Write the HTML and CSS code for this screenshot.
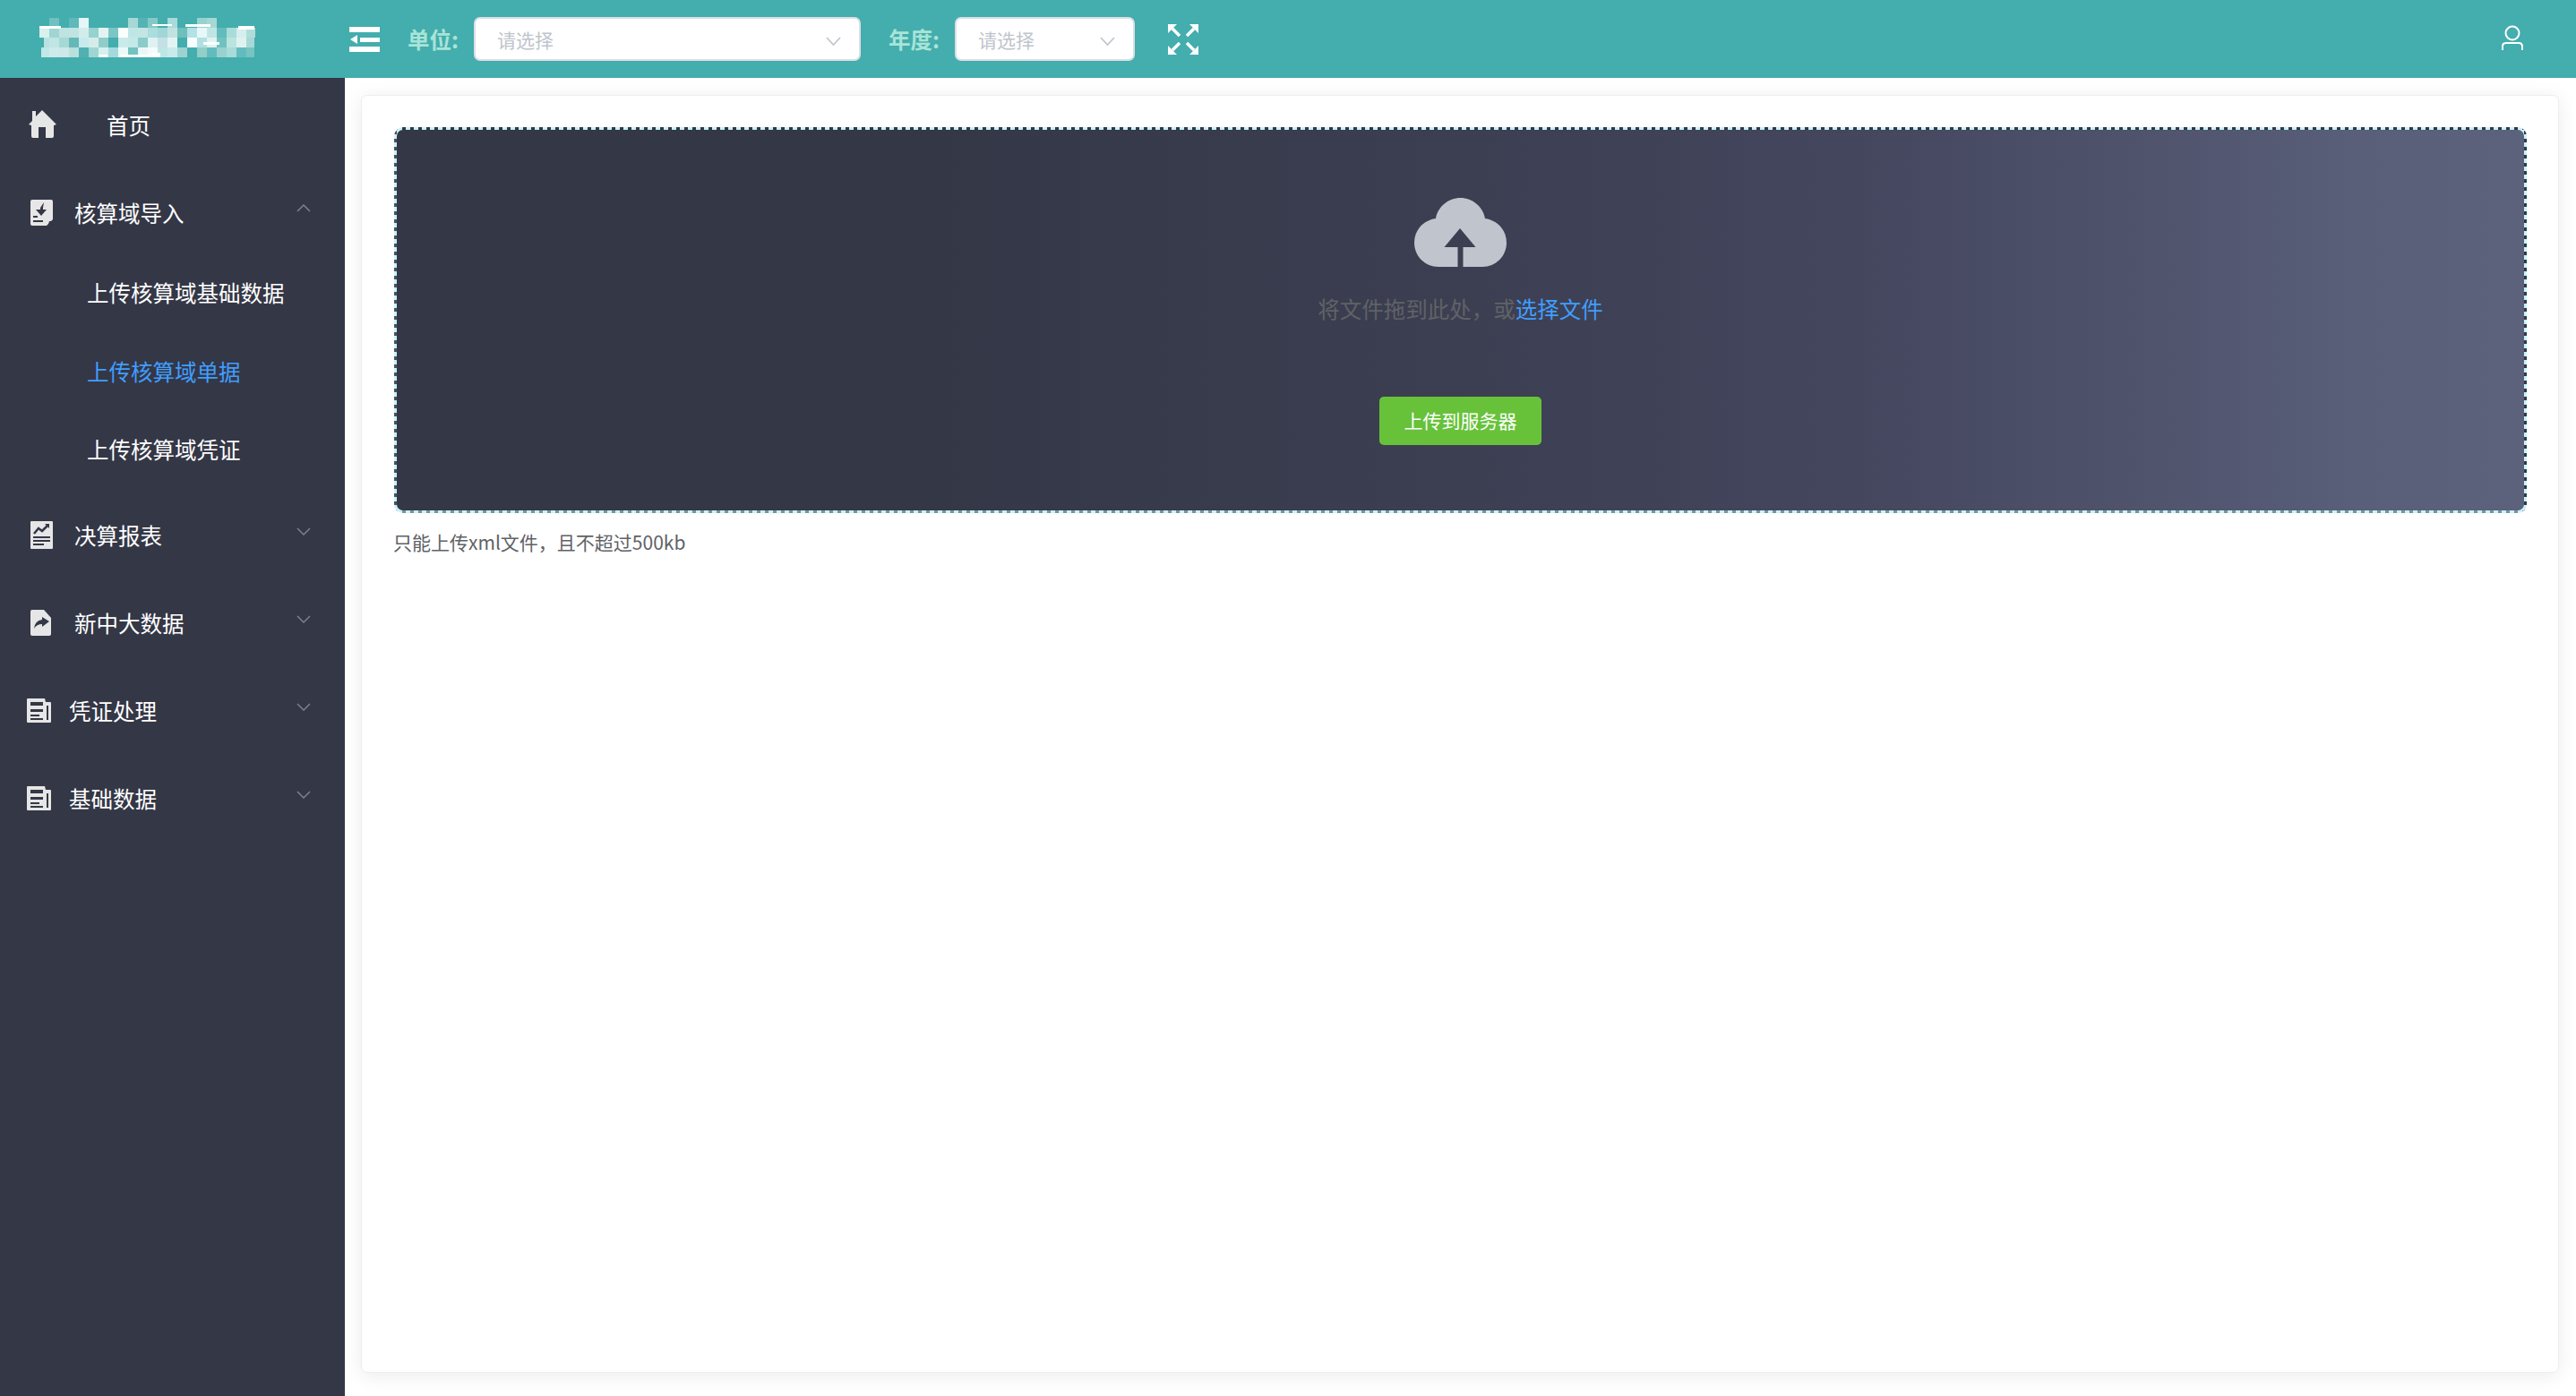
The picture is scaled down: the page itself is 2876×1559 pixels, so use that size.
FILE: index.html
```html
<!DOCTYPE html>
<html lang="en">
<head>
    <meta charset="UTF-8">
    <meta name="viewport" content="width=device-width, initial-scale=1.0">
    <title>核算域导入</title>
    <link rel="stylesheet" href="styles.css">
</head>
<body>
    <header class="topbar">
        <div class="logo">
            <!-- the product name is blurred to a mosaic in the original -->
            <svg width="242" height="44" viewBox="0 0 242 44" shape-rendering="crispEdges">
                <g>
                    <rect x="11" y="0" width="11" height="11" fill="#6fc0c2"/><rect x="33" y="0" width="11" height="11" fill="#5fb8ba"/><rect x="44" y="0" width="11" height="11" fill="#e6f6f6"/><rect x="99" y="0" width="11" height="11" fill="#a5d8d6"/><rect x="110" y="0" width="11" height="11" fill="#55b3b5"/><rect x="121" y="0" width="11" height="11" fill="#85c9c6"/><rect x="143" y="0" width="11" height="11" fill="#a8dada"/><rect x="176" y="0" width="11" height="11" fill="#96d2cf"/><rect x="187" y="0" width="11" height="11" fill="#a5d8d4"/>
                    <rect x="0" y="11" width="11" height="11" fill="#d8f0ee"/><rect x="11" y="11" width="11" height="11" fill="#a0d5d3"/><rect x="22" y="11" width="11" height="11" fill="#bfe3e1"/><rect x="33" y="11" width="11" height="11" fill="#c0e4e2"/><rect x="44" y="11" width="11" height="11" fill="#d2ecec"/><rect x="55" y="11" width="11" height="11" fill="#95d2d0"/><rect x="66" y="11" width="11" height="11" fill="#e3f3f1"/><rect x="77" y="11" width="11" height="11" fill="#7cc6c5"/><rect x="88" y="11" width="11" height="11" fill="#fafefd"/><rect x="99" y="11" width="11" height="11" fill="#bfe6e5"/><rect x="110" y="11" width="11" height="11" fill="#c3e5e3"/><rect x="121" y="11" width="11" height="11" fill="#a8dedd"/><rect x="132" y="11" width="11" height="11" fill="#a0d7d6"/><rect x="143" y="11" width="11" height="11" fill="#c0e3df"/><rect x="154" y="11" width="11" height="11" fill="#6fbfba"/><rect x="165" y="11" width="11" height="11" fill="#b2e1e6"/><rect x="176" y="11" width="11" height="11" fill="#e8f7f7"/><rect x="187" y="11" width="11" height="11" fill="#c0e6e4"/><rect x="198" y="11" width="11" height="11" fill="#62bcbc"/><rect x="209" y="11" width="11" height="11" fill="#a8dcd9"/><rect x="220" y="11" width="11" height="11" fill="#d5efec"/><rect x="231" y="11" width="10" height="11" fill="#b0dcd9"/>
                    <rect x="5" y="22" width="6" height="11" fill="#b8e2e0"/><rect x="11" y="22" width="11" height="11" fill="#c0e5e5"/><rect x="22" y="22" width="11" height="11" fill="#a5d9d6"/><rect x="33" y="22" width="11" height="11" fill="#66b8b8"/><rect x="44" y="22" width="11" height="11" fill="#c8e9ee"/><rect x="55" y="22" width="11" height="11" fill="#d5ece8"/><rect x="66" y="22" width="11" height="11" fill="#90cdc8"/><rect x="88" y="22" width="11" height="11" fill="#c8eaea"/><rect x="99" y="22" width="11" height="11" fill="#c5e8e8"/><rect x="110" y="22" width="11" height="11" fill="#8accc9"/><rect x="121" y="22" width="11" height="11" fill="#dff1f0"/><rect x="132" y="22" width="11" height="11" fill="#c5e0e5"/><rect x="143" y="22" width="11" height="11" fill="#e3f3f3"/><rect x="165" y="22" width="11" height="11" fill="#f8fefd"/><rect x="176" y="22" width="11" height="11" fill="#b0e0e2"/><rect x="187" y="22" width="11" height="11" fill="#e0f3ee"/><rect x="198" y="22" width="11" height="11" fill="#70c2c0"/><rect x="209" y="22" width="11" height="11" fill="#bce4df"/><rect x="220" y="22" width="11" height="11" fill="#dff2ef"/><rect x="231" y="22" width="9" height="11" fill="#a8d8d6"/>
                    <rect x="2" y="33" width="9" height="11" fill="#c0e8e8"/><rect x="11" y="33" width="11" height="11" fill="#cfeaea"/><rect x="22" y="33" width="11" height="11" fill="#cde8e8"/><rect x="33" y="33" width="11" height="11" fill="#b8e0dc"/><rect x="44" y="33" width="11" height="11" fill="#50b0b2"/><rect x="55" y="33" width="11" height="11" fill="#9fd6d2"/><rect x="66" y="33" width="11" height="11" fill="#d6efef"/><rect x="77" y="33" width="11" height="11" fill="#a5dadc"/><rect x="88" y="33" width="11" height="11" fill="#ecf9f8"/><rect x="99" y="33" width="11" height="11" fill="#72c2c0"/><rect x="110" y="33" width="11" height="11" fill="#eaf7f6"/><rect x="121" y="33" width="11" height="11" fill="#f5fbfb"/><rect x="132" y="33" width="11" height="11" fill="#bfe6e6"/><rect x="143" y="33" width="11" height="11" fill="#c8eaea"/><rect x="154" y="33" width="11" height="11" fill="#9cd3d1"/><rect x="176" y="33" width="11" height="11" fill="#92cfc6"/><rect x="187" y="33" width="11" height="11" fill="#62bcbf"/><rect x="198" y="33" width="11" height="11" fill="#98d2d0"/><rect x="209" y="33" width="11" height="11" fill="#a8dbd9"/><rect x="220" y="33" width="11" height="11" fill="#62bcbf"/><rect x="231" y="33" width="9" height="11" fill="#78c4c0"/>
                </g>
                <g fill="#ffffff">
                    <rect x="0" y="9" width="24" height="3"/><rect x="126" y="7" width="22" height="2"/><rect x="163" y="7" width="28" height="3"/><rect x="222" y="9" width="18" height="4"/><rect x="183" y="27" width="18" height="3"/><rect x="125" y="39" width="10" height="5"/><rect x="90" y="41" width="34" height="3"/><rect x="66" y="41" width="10" height="3"/>
                </g>
            </svg>
        </div>
        <svg class="menu-toggle" width="34" height="28" viewBox="0 0 34 28">
            <path d="M0 0H34V6H0ZM12 12H34V17H12ZM0 22H34V28H0ZM9 9V19L1 14Z" fill="#fff"/>
        </svg>
        <span class="filter-label">单位:</span>
        <div class="select select-unit">
            <span>请选择</span>
            <svg class="select-arrow" width="17" height="10" viewBox="0 0 17 10"><path d="M1 1L8.500 9L16 1" class="line"/></svg>
        </div>
        <span class="filter-label">年度:</span>
        <div class="select select-year">
            <span>请选择</span>
            <svg class="select-arrow" width="17" height="10" viewBox="0 0 17 10"><path d="M1 1L8.500 9L16 1" class="line"/></svg>
        </div>
        <svg class="fullscreen" width="34" height="34" viewBox="0 0 34 34">
            <path d="M0 0H10L0 10ZM34 0V10L24 0ZM0 34V24L10 34ZM34 34H24L34 24Z" fill="#fff"/>
            <path d="M5 5L13 13M29 5L21 13M5 29L13 21M29 29L21 21" stroke="#fff" stroke-width="3.500" fill="none"/>
        </svg>
        <svg class="user" width="26" height="28" viewBox="0 0 26 28">
            <circle cx="13" cy="9" r="7.500" fill="none" stroke="#fff" stroke-width="2"/>
            <path d="M2 28V24Q2 20 6 20H20Q24 20 24 24V28" fill="none" stroke="#fff" stroke-width="2"/>
        </svg>
    </header>

    <div class="layout">
        <nav class="sidebar">
            <a class="nav-item nav-home">
                <svg class="nav-icon" width="31" height="31" viewBox="0 0 31 31"><path d="M15 0L31 16L28 17V29Q28 31 26 31H19V19H11V31H5Q3 31 3 29V17L0 16L4 12V1H8V7Z"/></svg>
                <span>首页</span>
            </a>
            <a class="nav-item">
                <svg class="nav-icon" width="25" height="29" viewBox="0 0 25 29">
                    <path d="M2 0H23Q25 0 25 2V22L18 29H2Q0 29 0 27V2Q0 0 2 0Z"/>
                    <path d="M15 3L11 9V11H6L12 18L18 11H14V9Z" class="cut"/>
                    <path d="M3 18H8V20H3ZM3 23H14V25H3ZM21 24H24L20 28Z" class="cut"/>
                </svg>
                <span>核算域导入</span>
                <svg class="chevron" width="16" height="9" viewBox="0 0 16 9"><path d="M1 8L8 1L15 8"/></svg>
            </a>
            <div class="submenu">
                <a class="sub-item">上传核算域基础数据</a>
                <a class="sub-item active">上传核算域单据</a>
                <a class="sub-item">上传核算域凭证</a>
            </div>
            <a class="nav-item">
                <svg class="nav-icon" width="25" height="31" viewBox="0 0 25 31">
                    <path d="M1 0H24Q25 0 25 1V30Q25 31 24 31H1Q0 31 0 30V1Q0 0 1 0Z"/>
                    <path d="M4 14L9 8L13 11L20 4" class="cut-line"/>
                    <path d="M16 3H21V8Z" class="cut"/>
                    <path d="M3 17H22V19H3ZM3 21H22V23H3ZM3 25H15V27H3Z" class="cut"/>
                </svg>
                <span>决算报表</span>
                <svg class="chevron" width="16" height="9" viewBox="0 0 16 9"><path d="M1 1L8 8L15 1"/></svg>
            </a>
            <a class="nav-item nav-share">
                <svg class="nav-icon" width="23" height="29" viewBox="0 0 23 29">
                    <path d="M2 0H15L23 9V27Q23 29 21 29H2Q0 29 0 27V2Q0 0 2 0Z"/>
                    <path d="M13 8L21 13L13 19V16Q7 16 4 21Q5 12 13 11Z" class="cut"/>
                </svg>
                <span>新中大数据</span>
                <svg class="chevron" width="16" height="9" viewBox="0 0 16 9"><path d="M1 1L8 8L15 1"/></svg>
            </a>
            <a class="nav-item nav-wide">
                <svg class="nav-icon" width="27" height="27" viewBox="0 0 27 27">
                    <path d="M1 0H20L21 4H26Q27 4 27 5V26Q27 27 26 27H1Q0 27 0 26V1Q0 0 1 0Z"/>
                    <path d="M4 4H18V8H4ZM4 12H18V15H4ZM4 18H14V20H4ZM4 22H18V24H4ZM22 8H24V24H22Z" class="cut"/>
                </svg>
                <span>凭证处理</span>
                <svg class="chevron" width="16" height="9" viewBox="0 0 16 9"><path d="M1 1L8 8L15 1"/></svg>
            </a>
            <a class="nav-item nav-wide">
                <svg class="nav-icon" width="27" height="27" viewBox="0 0 27 27">
                    <path d="M1 0H20L21 4H26Q27 4 27 5V26Q27 27 26 27H1Q0 27 0 26V1Q0 0 1 0Z"/>
                    <path d="M4 4H18V8H4ZM4 12H18V15H4ZM4 18H14V20H4ZM4 22H18V24H4ZM22 8H24V24H22Z" class="cut"/>
                </svg>
                <span>基础数据</span>
                <svg class="chevron" width="16" height="9" viewBox="0 0 16 9"><path d="M1 1L8 8L15 1"/></svg>
            </a>
        </nav>

        <main class="content">
            <section class="card">
                <div class="dropzone">
                    <svg class="cloud" width="103" height="77" viewBox="0 0 103 77">
                        <path d="M27 77C12 77 0 65 0 50C0 36 10 25 24 23C26 10 38 0 51.500 0C65 0 77 10 79 23C93 25 103 36 103 50C103 65 91 77 76 77H54.500V55H68.500L51 34L33.500 55H48.500V77Z" fill="#c0c4cc"/>
                    </svg>
                    <p class="drop-text">将文件拖到此处，或<em>选择文件</em></p>
                    <button class="upload-btn">上传到服务器</button>
                </div>
                <p class="tip">只能上传xml文件，且不超过500kb</p>
            </section>
        </main>
    </div>
</body>
</html>
```

FILE: styles.css
```css
* {
    box-sizing: border-box;
}
body {
    margin: 0;
    height: 100vh;
    overflow: hidden;
    display: flex;
    flex-direction: column;
    font-family: "Noto Sans CJK SC", "Noto Sans", sans-serif;
    background-color: #fff;
}

/* top bar */
.topbar {
    height: 87px;
    flex-shrink: 0;
    display: flex;
    align-items: center;
    background-color: #44adad;
}
.logo {
    width: 390px;
    padding: 0 0 3px 44px;
    display: flex;
}
.menu-toggle {
    margin-right: 31px;
}
.filter-label {
    width: 58px;
    margin-right: 16px;
    font-size: 24.5px;
    font-weight: bold;
    white-space: nowrap;
    color: #a8e4d8;
}
.select {
    height: 49px;
    padding: 0 20px 0 24px;
    display: flex;
    align-items: center;
    justify-content: space-between;
    background: #fff;
    border: 2px solid #dcdfe6;
    border-radius: 7px;
    font-size: 21px;
    color: #c0c4cc;
}
.select-unit {
    width: 432px;
    margin-right: 31px;
}
.select-year {
    width: 201px;
    margin-right: 37px;
}
.select-arrow {
    margin-top: 4px;
}
.line {
    fill: none;
    stroke: #c0c4cc;
    stroke-width: 1.75;
}
.user {
    margin: 0 58px 3px auto;
}

/* sidebar */
.layout {
    flex: 1;
    display: flex;
    min-height: 0;
}
.sidebar {
    width: 385px;
    flex-shrink: 0;
    padding-top: 4px;
    background-color: #343746;
}
.nav-item {
    height: 98px;
    padding: 0 38px 0 34px;
    display: flex;
    align-items: center;
    font-size: 24.5px;
    color: #fff;
}
.nav-item span {
    margin: 0 0 2px 24px;
}
.nav-icon {
    fill: #e6e6e6;
    margin-bottom: 2px;
}
.nav-home {
    padding-left: 32px;
}
.nav-home .nav-icon {
    margin-bottom: 4px;
}
.nav-home span {
    margin-left: 56px;
}
.nav-share span {
    margin-left: 26px;
}
.nav-wide {
    padding-left: 30px;
}
.nav-wide span {
    margin-left: 20px;
}
.cut {
    fill: #343746;
}
.cut-line {
    fill: none;
    stroke: #343746;
    stroke-width: 2.5;
}
.chevron {
    margin: 0 0 11px auto;
}
.chevron path {
    fill: none;
    stroke: #7d808c;
    stroke-width: 1.5;
}
.submenu {
    margin: -4px 0 4px;
}
.sub-item {
    height: 87.500px;
    padding-left: 97px;
    display: flex;
    align-items: center;
    font-size: 24.5px;
    color: #fff;
}
.sub-item.active {
    color: #409eff;
}

/* main area */
.content {
    flex: 1;
    min-width: 0;
    padding: 19px 19px 26px 18px;
}
.card {
    height: 100%;
    padding: 35px 35px 0 36px;
    background: #fff;
    border: 1px solid #ebeef5;
    border-radius: 7px;
    box-shadow: 0 3.500px 21px rgba(0, 0, 0, 0.08);
}
.dropzone {
    height: 431px;
    padding-top: 76px;
    display: flex;
    flex-direction: column;
    align-items: center;
    border: 3px solid transparent;
    border-radius: 10px;
    /* dashes sit on a pale blue strip, one layer per side */
    background:
        repeating-linear-gradient(90deg, #343746 0 4px, transparent 4px 9px) top / 100% 3px no-repeat border-box,
        repeating-linear-gradient(90deg, #7f92a0 0 4px, transparent 4px 9px) bottom / 100% 3px no-repeat border-box,
        repeating-linear-gradient(0deg, #4c4f60 0 4px, transparent 4px 9px) left / 3px 100% no-repeat border-box,
        repeating-linear-gradient(0deg, #343746 0 4px, transparent 4px 9px) right / 3px 100% no-repeat border-box,
        linear-gradient(90deg, #343746 0%, #343746 25%, #3c3f52 50%, #43465d 68%, #4f536c 82%, #595e79 92%, #5c617c 100%) padding-box,
        #c8f3f9 border-box;
}
.cloud {
    flex-shrink: 0;
}
.drop-text {
    margin: 29px 0 0;
    font-size: 24.5px;
    line-height: 36px;
    color: #606266;
}
.drop-text em {
    font-style: normal;
    color: #409eff;
}
.upload-btn {
    width: 181px;
    height: 54px;
    margin-top: 80px;
    padding: 0 0 2px;
    background-color: #67c23a;
    border: none;
    border-radius: 5px;
    font-family: inherit;
    font-size: 21px;
    color: #fff;
}
.tip {
    margin: 14px 0 0 -1px;
    font-size: 21px;
    line-height: 36px;
    color: #606266;
}
```
